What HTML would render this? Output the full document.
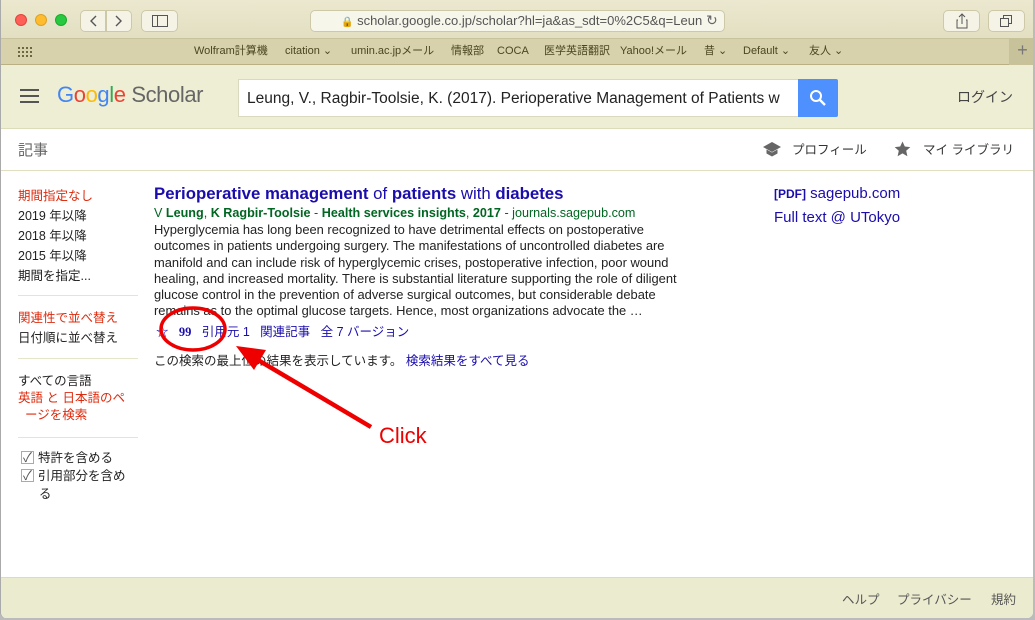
<!DOCTYPE html>
<html><head><meta charset="utf-8"><style>
*{margin:0;padding:0;box-sizing:border-box}
body{width:1035px;height:620px;overflow:hidden;background:#bbb;font-family:"Liberation Sans","Noto Sans CJK JP",sans-serif;position:relative}
.win{position:absolute;left:0;top:0;width:1033px;height:618px;background:#fff;border-left:1px solid #aaa;border-radius:0 0 6px 6px;overflow:hidden}
.abs{position:absolute;white-space:nowrap}
.tb{position:absolute;left:0;top:0;width:1035px;height:38px;background:linear-gradient(#ebe8cf,#e2dfc2)}
.bm{position:absolute;left:0;top:38px;width:1035px;height:27px;background:#d7d2ab;border-top:1px solid #c8c39c;border-bottom:1px solid #b9b183}
.bm span{position:absolute;top:5px;font-size:11px;line-height:14px;height:14px;color:#4b4520}
.btn{position:absolute;background:#f5f3e6;border:1px solid #cdc8a8;border-radius:5px}
.hd{position:absolute;left:0;top:65px;width:1035px;height:64px;background:#eeeed5;border-bottom:1px solid #dcdcb8}
.sub{position:absolute;left:0;top:129px;width:1035px;height:42px;border-bottom:1px solid #e0e0c0}
.side{font-size:12.5px;color:#222}
.red{color:#dd2b0e}
.hr{position:absolute;left:17px;width:120px;height:1px;background:#e5e5c8}
.lnk{color:#1a0dab}
.ft{position:absolute;left:0;top:577px;width:1035px;height:45px;background:#ebebcf;border-top:1px solid #dcdcbc}
.abs13{font-size:12.9px;color:#222;line-height:16.3px}
</style></head><body>
<div class="win">
<div class="tb"></div>
<div class="abs" style="left:14px;top:14px;width:12px;height:12px;border-radius:50%;background:#fe5f57;border:1px solid #e0443e"></div>
<div class="abs" style="left:34px;top:14px;width:12px;height:12px;border-radius:50%;background:#febc2e;border:1px solid #dea123"></div>
<div class="abs" style="left:54px;top:14px;width:12px;height:12px;border-radius:50%;background:#28c840;border:1px solid #1aab29"></div>
<div class="btn" style="left:79px;top:10px;width:26px;height:22px;border-radius:5px 0 0 5px"></div>
<div class="btn" style="left:105px;top:10px;width:26px;height:22px;border-radius:0 5px 5px 0"></div>
<svg class="abs" style="left:79px;top:10px" width="52" height="22"><path d="M16 6l-5 5 5 5M36 6l5 5-5 5" stroke="#555" stroke-width="1.4" fill="none"/></svg>
<div class="btn" style="left:140px;top:10px;width:37px;height:22px"></div>
<svg class="abs" style="left:151px;top:15px" width="16" height="12"><rect x="0.5" y="0.5" width="15" height="11" fill="none" stroke="#555"/><line x1="5.5" y1="0" x2="5.5" y2="12" stroke="#555"/></svg>
<div class="btn" style="left:309px;top:10px;width:415px;height:22px;background:#f7f6ea"></div>
<div class="abs" style="left:340px;top:13px;font-size:13px;color:#555"><span style="font-size:10px">🔒</span> scholar.google.co.jp/scholar?hl=ja&amp;as_sdt=0%2C5&amp;q=Leun</div>
<div class="abs" style="left:705px;top:12px;font-size:14px;color:#666">↻</div>
<div class="btn" style="left:942px;top:10px;width:37px;height:22px"></div>
<div class="btn" style="left:987px;top:10px;width:37px;height:22px"></div>
<svg class="abs" style="left:953px;top:13px" width="16" height="16"><path d="M8 1v10M5 4l3-3 3 3M4 7H3v8h10V7h-1" stroke="#555" fill="none"/></svg>
<svg class="abs" style="left:998px;top:14px" width="14" height="14"><rect x="1.5" y="4.5" width="8" height="8" fill="none" stroke="#555"/><path d="M4.5 4.5V1.5h8v8h-3" fill="none" stroke="#555"/></svg>
<div class="bm">
<svg class="abs" style="left:16px;top:7px" width="16" height="12"><g fill="#4b4520"><circle cx="2" cy="2" r="1"/><circle cx="6" cy="2" r="1"/><circle cx="10" cy="2" r="1"/><circle cx="14" cy="2" r="1"/><circle cx="2" cy="6" r="1"/><circle cx="6" cy="6" r="1"/><circle cx="10" cy="6" r="1"/><circle cx="14" cy="6" r="1"/><circle cx="2" cy="10" r="1"/><circle cx="6" cy="10" r="1"/><circle cx="10" cy="10" r="1"/><circle cx="14" cy="10" r="1"/></g></svg>
<span style="left:193px">Wolfram計算機</span><span style="left:284px">citation ⌄</span><span style="left:350px">umin.ac.jpメール</span><span style="left:450px">情報部</span><span style="left:496px">COCA</span><span style="left:543px">医学英語翻訳</span><span style="left:619px">Yahoo!メール</span><span style="left:703px">昔 ⌄</span><span style="left:742px">Default ⌄</span><span style="left:808px">友人 ⌄</span>
<div style="position:absolute;left:1008px;top:-1px;width:27px;height:27px;background:#c8c29b;color:#777;font-size:18px;text-align:center;line-height:24px">+</div>
</div>
<div class="hd">
<svg class="abs" style="left:19px;top:24px" width="20" height="14"><path d="M0 1h19M0 7h19M0 13h19" stroke="#555" stroke-width="2"/></svg>
<div class="abs" style="left:56px;top:17px;font-size:22px;letter-spacing:-0.4px"><span style="color:#4285f4">G</span><span style="color:#ea4335">o</span><span style="color:#fbbc05">o</span><span style="color:#4285f4">g</span><span style="color:#34a853">l</span><span style="color:#ea4335">e</span> <span style="color:#666">Scholar</span></div>
<div class="abs" style="left:237px;top:14px;width:561px;height:38px;background:#fff;border:1px solid #d9d9c0;overflow:hidden"><div style="padding:10px 8px;font-size:15.5px;color:#222">Leung, V., Ragbir-Toolsie, K. (2017). Perioperative Management of Patients w</div></div>
<div class="abs" style="left:797px;top:14px;width:40px;height:38px;background:#4d90fe;border-radius:0 2px 2px 0"></div>
<svg class="abs" style="left:808px;top:24px" width="18" height="18"><circle cx="7" cy="7" r="5" stroke="#fff" stroke-width="2" fill="none"/><path d="M11 11l5 5" stroke="#fff" stroke-width="2.4"/></svg>
<div class="abs" style="left:956px;top:22px;font-size:14px;color:#444">ログイン</div>
</div>
<div class="sub">
<div class="abs" style="left:17px;top:10px;font-size:15px;color:#666">記事</div>
<svg class="abs" style="left:762px;top:12px" width="18" height="16"><path d="M9 1L0 6l9 5 9-5z" fill="#666"/><path d="M3.5 8.5v4l5.5 3 5.5-3v-4L9 11.5z" fill="#666"/></svg>
<div class="abs" style="left:791px;top:10px;font-size:12.5px;color:#333">プロフィール</div>
<svg class="abs" style="left:893px;top:12px" width="17" height="16"><path d="M8.5 0.5l2.3 5 5.5.6-4.1 3.7 1.2 5.4-4.9-2.8-4.9 2.8 1.2-5.4L.7 6.1l5.5-.6z" fill="#666"/></svg>
<div class="abs" style="left:922px;top:10px;font-size:12.5px;color:#333">マイ ライブラリ</div>
</div>
<div class="abs side red" style="left:17px;top:185px">期間指定なし</div>
<div class="abs side" style="left:17px;top:205px">2019 年以降</div>
<div class="abs side" style="left:17px;top:225px">2018 年以降</div>
<div class="abs side" style="left:17px;top:245px">2015 年以降</div>
<div class="abs side" style="left:17px;top:265px">期間を指定...</div>
<div class="hr" style="top:295px"></div>
<div class="abs side red" style="left:17px;top:307px">関連性で並べ替え</div>
<div class="abs side" style="left:17px;top:327px">日付順に並べ替え</div>
<div class="hr" style="top:358px"></div>
<div class="abs side" style="left:17px;top:370px">すべての言語</div>
<div class="abs side red" style="left:17px;top:390px;line-height:17px">英語 と 日本語のペ<br>&nbsp;&nbsp;ージを検索</div>
<div class="hr" style="top:437px"></div>
<div class="abs side" style="left:17px;top:449px;line-height:18px"><span style="display:inline-block;width:13px;height:13px;border:1px solid #aaa;vertical-align:-2px;margin:0 4px 0 3px;position:relative"><span style="position:absolute;left:1px;top:-3px;font-size:13px;color:#555">✓</span></span>特許を含める<br><span style="display:inline-block;width:13px;height:13px;border:1px solid #aaa;vertical-align:-2px;margin:0 4px 0 3px;position:relative"><span style="position:absolute;left:1px;top:-3px;font-size:13px;color:#555">✓</span></span>引用部分を含め<br>&nbsp;&nbsp;&nbsp;&nbsp;&nbsp;&nbsp;る</div>

<div class="abs lnk" style="left:153px;top:184px;font-size:16.8px"><b>Perioperative management</b> of <b>patients</b> with <b>diabetes</b></div>
<div class="abs" style="left:153px;top:206px;font-size:12.6px;color:#006621">V <b>Leung</b>, <b>K Ragbir-Toolsie</b> - <b>Health services insights</b>, <b>2017</b> - journals.sagepub.com</div>
<div class="abs abs13" style="left:153px;top:222px">Hyperglycemia has long been recognized to have detrimental effects on postoperative<br>outcomes in patients undergoing surgery. The manifestations of uncontrolled diabetes are<br>manifold and can include risk of hyperglycemic crises, postoperative infection, poor wound<br>healing, and increased mortality. There is substantial literature supporting the role of diligent<br>glucose control in the prevention of adverse surgical outcomes, but considerable debate<br>remains as to the optimal glucose targets. Hence, most organizations advocate the …</div>
<div class="abs lnk" style="left:155px;top:321px;font-size:12.5px">☆ &nbsp;&nbsp;<b style="font-family:serif">99</b> &nbsp;&nbsp;引用元 1 &nbsp;&nbsp;関連記事 &nbsp;&nbsp;全 7 バージョン</div>
<div class="abs" style="left:153px;top:350px;font-size:12.5px;color:#222">この検索の最上位の結果を表示しています。 <span class="lnk">検索結果をすべて見る</span></div>
<div class="abs lnk" style="left:773px;top:185px;font-size:15px"><b style="font-size:12px">[PDF]</b> sagepub.com</div>
<div class="abs lnk" style="left:773px;top:209px;font-size:15px">Full text @ UTokyo</div>

<svg class="abs" style="left:0;top:0" width="1035" height="620">
<ellipse cx="192" cy="329" rx="32" ry="21" fill="none" stroke="#ee0000" stroke-width="3.5"/>
<path d="M370 427L252 357" stroke="#ee0000" stroke-width="4.5"/>
<path d="M235 346L265 350L253 370z" fill="#ee0000"/>
</svg>
<div class="abs" style="left:378px;top:423px;font-size:22px;color:#ee0000">Click</div>

<div class="ft">
<div class="abs" style="left:841px;top:11px;font-size:12.5px;color:#555">ヘルプ</div>
<div class="abs" style="left:896px;top:11px;font-size:12.5px;color:#555">プライバシー</div>
<div class="abs" style="left:990px;top:11px;font-size:12.5px;color:#555">規約</div>
</div>
</div>
</body></html>
